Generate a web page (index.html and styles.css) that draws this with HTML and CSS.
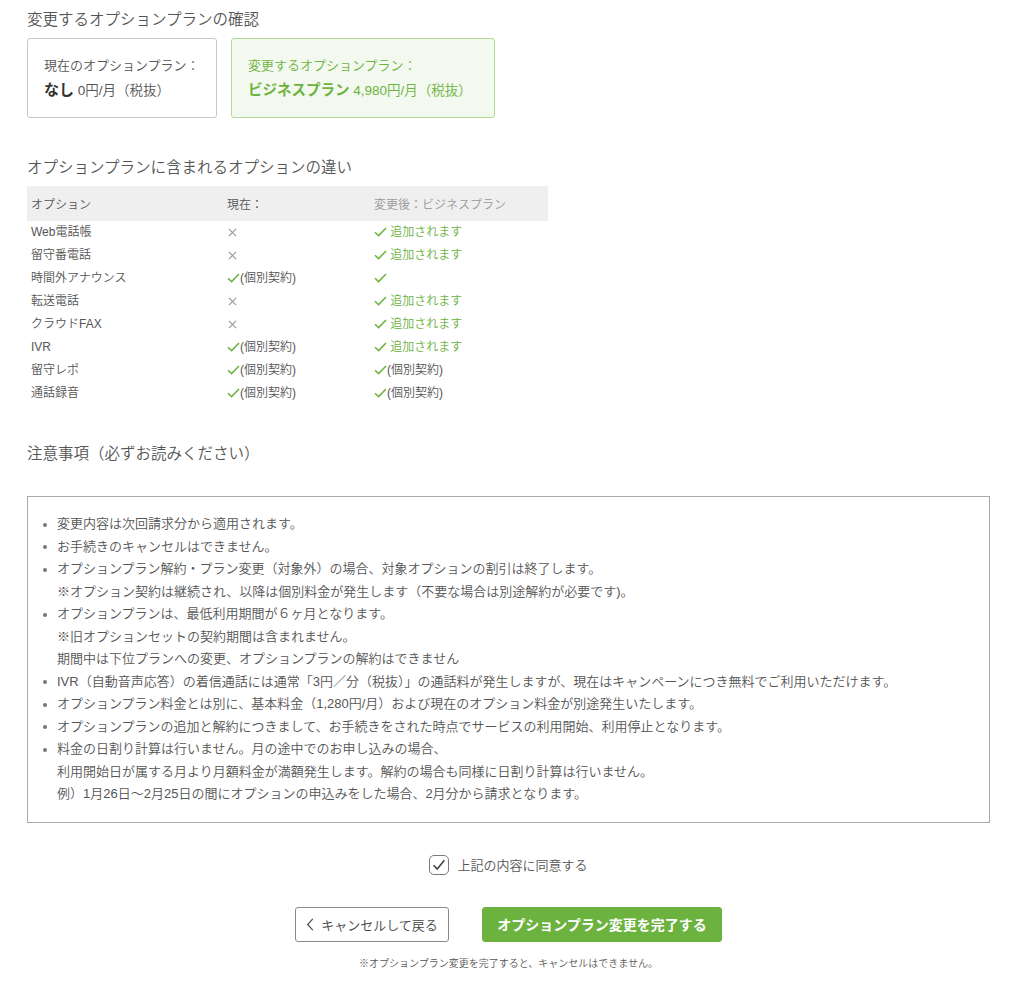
FILE: index.html
```html
<!DOCTYPE html>
<html lang="ja">
<head>
<meta charset="utf-8">
<title>オプションプラン変更の確認</title>
<link rel="stylesheet" href="styles.css">
</head>
<body>
<main class="page">
  <h2 class="section-title first">変更するオプションプランの確認</h2>
  <div class="plans">
    <div class="plan-card current">
      <div class="plan-label">現在のオプションプラン：</div>
      <div class="plan-value"><strong>なし</strong> 0円/月（税抜）</div>
    </div>
    <div class="plan-card new">
      <div class="plan-label">変更するオプションプラン：</div>
      <div class="plan-value"><strong>ビジネスプラン</strong> 4,980円/月（税抜）</div>
    </div>
  </div>

  <h2 class="section-title second">オプションプランに含まれるオプションの違い</h2>
  <table class="diff">
    <thead>
      <tr><th class="c1">オプション</th><th class="c2">現在：</th><th class="c3 muted">変更後：ビジネスプラン</th></tr>
    </thead>
    <tbody>
      <tr><td>Web電話帳</td><td><svg class="x" viewBox="0 0 10 10"><path d="M1 1L9 9M9 1L1 9"/></svg></td><td class="add"><svg class="ck" viewBox="0 0 13 10"><path d="M1 5.2L4.6 8.6L12 1"/></svg> 追加されます</td></tr>
      <tr><td>留守番電話</td><td><svg class="x" viewBox="0 0 10 10"><path d="M1 1L9 9M9 1L1 9"/></svg></td><td class="add"><svg class="ck" viewBox="0 0 13 10"><path d="M1 5.2L4.6 8.6L12 1"/></svg> 追加されます</td></tr>
      <tr><td>時間外アナウンス</td><td><svg class="ck" viewBox="0 0 13 10"><path d="M1 5.2L4.6 8.6L12 1"/></svg>(個別契約)</td><td class="add"><svg class="ck" viewBox="0 0 13 10"><path d="M1 5.2L4.6 8.6L12 1"/></svg></td></tr>
      <tr><td>転送電話</td><td><svg class="x" viewBox="0 0 10 10"><path d="M1 1L9 9M9 1L1 9"/></svg></td><td class="add"><svg class="ck" viewBox="0 0 13 10"><path d="M1 5.2L4.6 8.6L12 1"/></svg> 追加されます</td></tr>
      <tr><td>クラウドFAX</td><td><svg class="x" viewBox="0 0 10 10"><path d="M1 1L9 9M9 1L1 9"/></svg></td><td class="add"><svg class="ck" viewBox="0 0 13 10"><path d="M1 5.2L4.6 8.6L12 1"/></svg> 追加されます</td></tr>
      <tr><td>IVR</td><td><svg class="ck" viewBox="0 0 13 10"><path d="M1 5.2L4.6 8.6L12 1"/></svg>(個別契約)</td><td class="add"><svg class="ck" viewBox="0 0 13 10"><path d="M1 5.2L4.6 8.6L12 1"/></svg> 追加されます</td></tr>
      <tr><td>留守レポ</td><td><svg class="ck" viewBox="0 0 13 10"><path d="M1 5.2L4.6 8.6L12 1"/></svg>(個別契約)</td><td><svg class="ck" viewBox="0 0 13 10"><path d="M1 5.2L4.6 8.6L12 1"/></svg>(個別契約)</td></tr>
      <tr><td>通話録音</td><td><svg class="ck" viewBox="0 0 13 10"><path d="M1 5.2L4.6 8.6L12 1"/></svg>(個別契約)</td><td><svg class="ck" viewBox="0 0 13 10"><path d="M1 5.2L4.6 8.6L12 1"/></svg>(個別契約)</td></tr>
    </tbody>
  </table>

  <h2 class="section-title third">注意事項（必ずお読みください）</h2>
  <div class="notes">
    <ul>
      <li>変更内容は次回請求分から適用されます。</li>
      <li>お手続きのキャンセルはできません。</li>
      <li>オプションプラン解約・プラン変更（対象外）の場合、対象オプションの割引は終了します。<br>※オプション契約は継続され、以降は個別料金が発生します（不要な場合は別途解約が必要です)。</li>
      <li>オプションプランは、最低利用期間が６ヶ月となります。<br>※旧オプションセットの契約期間は含まれません。<br>期間中は下位プランへの変更、オプションプランの解約はできません</li>
      <li>IVR（自動音声応答）の着信通話には通常「3円／分（税抜）」の通話料が発生しますが、現在はキャンペーンにつき無料でご利用いただけます。</li>
      <li>オプションプラン料金とは別に、基本料金（1,280円/月）および現在のオプション料金が別途発生いたします。</li>
      <li>オプションプランの追加と解約につきまして、お手続きをされた時点でサービスの利用開始、利用停止となります。</li>
      <li>料金の日割り計算は行いません。月の途中でのお申し込みの場合、<br>利用開始日が属する月より月額料金が満額発生します。解約の場合も同様に日割り計算は行いません。<br>例）1月26日〜2月25日の間にオプションの申込みをした場合、2月分から請求となります。</li>
    </ul>
  </div>

  <label class="agree">
    <span class="box"><svg viewBox="0 0 20 20"><path d="M4 10.3L8 14.5L16 4.8"/></svg></span>
    <span>上記の内容に同意する</span>
  </label>

  <div class="actions">
    <button class="btn back"><svg class="chev" viewBox="0 0 8 14"><path d="M7 1L1.5 7L7 13"/></svg>キャンセルして戻る</button>
    <button class="btn submit">オプションプラン変更を完了する</button>
  </div>
  <p class="warn">※オプションプラン変更を完了すると、キャンセルはできません。</p>
</main>
</body>
</html>
```

FILE: styles.css
```css
* { box-sizing: border-box; }
body {
  margin: 0;
  background: #fff;
  color: #555;
  font-family: "Liberation Sans", "Noto Sans CJK JP", sans-serif;
  font-weight: 350;
}
.page {
  width: 1024px;
  padding: 8px 34px 0 27px;
}
.section-title {
  margin: 0;
  font-size: 15.5px;
  font-weight: 350;
  line-height: 24px;
  color: #555;
}
.section-title.first { margin-bottom: 6px; }
.section-title.second { margin-top: 38px; margin-bottom: 6px; }
.section-title.third { margin-top: 37px; margin-bottom: 30px; }

.plans {
  display: flex;
  gap: 14px;
}
.plan-card {
  height: 80px;
  border: 1px solid #c8c8c8;
  border-radius: 3px;
  padding: 0 10px 0 16px;
  display: flex;
  flex-direction: column;
  justify-content: center;
  font-size: 13px;
  line-height: 24px;
  color: #555;
  white-space: nowrap;
}
.plan-card.current { width: 190px; }
.plan-card.new {
  width: 264px;
  background: #f3f9ee;
  border-color: #b3db96;
  color: #6cb23f;
}
.plan-value { font-size: 13.5px; }
.plan-value strong {
  font-size: 15px;
  font-weight: bold;
  color: #333;
}
.plan-card.new .plan-value strong {
  font-size: 14.5px;
  color: #6cb23f;
}

.diff {
  width: 521px;
  border-collapse: collapse;
  font-size: 12px;
  color: #555;
}
.diff th {
  height: 35px;
  background: #f0eff0;
  text-align: left;
  font-weight: 350;
  padding: 0 4px;
}
.diff th.c1 { width: 196px; }
.diff th.c2 { width: 147px; }
.diff th.muted { color: #999; }
.diff td {
  height: 23px;
  padding: 0 4px;
  line-height: 23px;
  white-space: nowrap;
}
.diff td.add { color: #6cb23f; }
.ck {
  width: 13px;
  height: 10px;
  vertical-align: -1px;
  fill: none;
  stroke: #6cb23f;
  stroke-width: 1.5;
}
.x {
  width: 9px;
  height: 9px;
  margin-left: 1px;
  vertical-align: -1px;
  fill: none;
  stroke: #999;
  stroke-width: 1.3;
}

.notes {
  border: 1px solid #a9a9a9;
  padding: 16px 20px 16px 15px;
  font-size: 13px;
  line-height: 22.5px;
  color: #555;
}
.notes ul {
  list-style: none;
  margin: 0;
  padding: 0;
}
.notes li {
  position: relative;
  padding-left: 14px;
}
.notes li::before {
  content: "";
  position: absolute;
  left: 0;
  top: 9.5px;
  width: 4px;
  height: 4px;
  border-radius: 50%;
  background: #777;
}

.agree {
  display: flex;
  justify-content: center;
  align-items: center;
  gap: 8px;
  margin-top: 32px;
  font-size: 13px;
  color: #555;
}
.agree .box {
  width: 20px;
  height: 20px;
  border: 1.5px solid #7a7a7a;
  border-radius: 5px;
  display: flex;
  align-items: center;
  justify-content: center;
}
.agree .box svg {
  width: 18px;
  height: 18px;
  fill: none;
  stroke: #444;
  stroke-width: 1.8;
}

.actions {
  display: flex;
  justify-content: center;
  gap: 33px;
  margin-top: 32px;
}
.btn {
  height: 35px;
  border-radius: 3px;
  font-family: inherit;
  font-size: 13px;
  font-weight: 350;
  cursor: pointer;
  display: flex;
  align-items: center;
  justify-content: center;
}
.btn.back {
  width: 154px;
  background: #fff;
  border: 1px solid #8a8a8a;
  color: #444;
  gap: 7px;
  padding: 0;
}
.chev {
  width: 8px;
  height: 13px;
  fill: none;
  stroke: #555;
  stroke-width: 1.4;
}
.btn.submit {
  width: 240px;
  background: #6cb23f;
  border: 1px solid #6cb23f;
  color: #fff;
  font-size: 14px;
  font-weight: bold;
}
.warn {
  margin: 15px 0 0;
  text-align: center;
  font-size: 10px;
  line-height: 14px;
  color: #555;
}
```
